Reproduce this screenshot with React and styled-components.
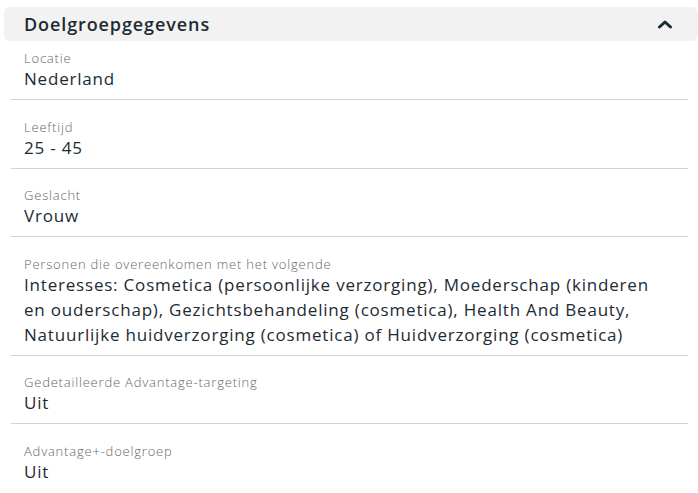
import React from 'react';
import styled, { createGlobalStyle } from 'styled-components';

const GlobalStyle = createGlobalStyle`
  body {
    margin: 0;
    background: #ffffff;
    font-family: "Open Sans", "Noto Sans", sans-serif;
  }
`;

const Panel = styled.div`
  width: 694px;
  padding: 7px 0 0 4px;
`;

const Header = styled.div`
  display: flex;
  align-items: center;
  justify-content: space-between;
  height: 34px;
  padding: 0 25px 0 20px;
  background: #f2f2f2;
  border-radius: 6px;
`;

const Title = styled.h2`
  margin: 0;
  font-size: 18px;
  font-weight: 600;
  color: #1c2b33;
  letter-spacing: 0.9px;
`;

const Toggle = styled.button`
  display: flex;
  align-items: center;
  justify-content: center;
  padding: 0;
  background: none;
  border: none;
  cursor: pointer;
`;

const List = styled.div`
  display: flex;
  flex-direction: column;
  padding-top: 9px;
`;

const Row = styled.div`
  margin: 0 10px 0 7px;
  padding: ${p => (p.first ? '0' : '18.5px')} 20px 8px 13px;
  border-bottom: ${p => (p.last ? 'none' : '1px solid #cfd3da')};
`;

const Label = styled.div`
  font-size: 13px;
  line-height: 16px;
  font-weight: 300;
  color: #65676b;
  letter-spacing: 0.8px;
`;

const Value = styled.div`
  font-size: 17px;
  line-height: 25px;
  color: #1c2b33;
  letter-spacing: 0.8px;
`;

const rows = [
  { label: 'Locatie', value: 'Nederland' },
  { label: 'Leeftijd', value: '25 - 45' },
  { label: 'Geslacht', value: 'Vrouw' },
  {
    label: 'Personen die overeenkomen met het volgende',
    value:
      'Interesses: Cosmetica (persoonlijke verzorging), Moederschap (kinderen en ouderschap), Gezichtsbehandeling (cosmetica), Health And Beauty, Natuurlijke huidverzorging (cosmetica) of Huidverzorging (cosmetica)',
  },
  { label: 'Gedetailleerde Advantage-targeting', value: 'Uit' },
  { label: 'Advantage+-doelgroep', value: 'Uit' },
];

const App = () => (
  <>
    <GlobalStyle />
    <Panel>
      <Header>
        <Title>Doelgroepgegevens</Title>
        <Toggle aria-label="Inklappen">
          <svg width="16" height="10" viewBox="0 0 16 10">
            <polyline
              points="2.5,8 8,3 13.5,8"
              fill="none"
              stroke="#1c2b33"
              strokeWidth="3"
              strokeLinecap="round"
              strokeLinejoin="round"
            />
          </svg>
        </Toggle>
      </Header>
      <List>
        {rows.map((r, i) => (
          <Row key={r.label} first={i === 0} last={i === rows.length - 1}>
            <Label>{r.label}</Label>
            <Value>{r.value}</Value>
          </Row>
        ))}
      </List>
    </Panel>
  </>
);

export default App;
